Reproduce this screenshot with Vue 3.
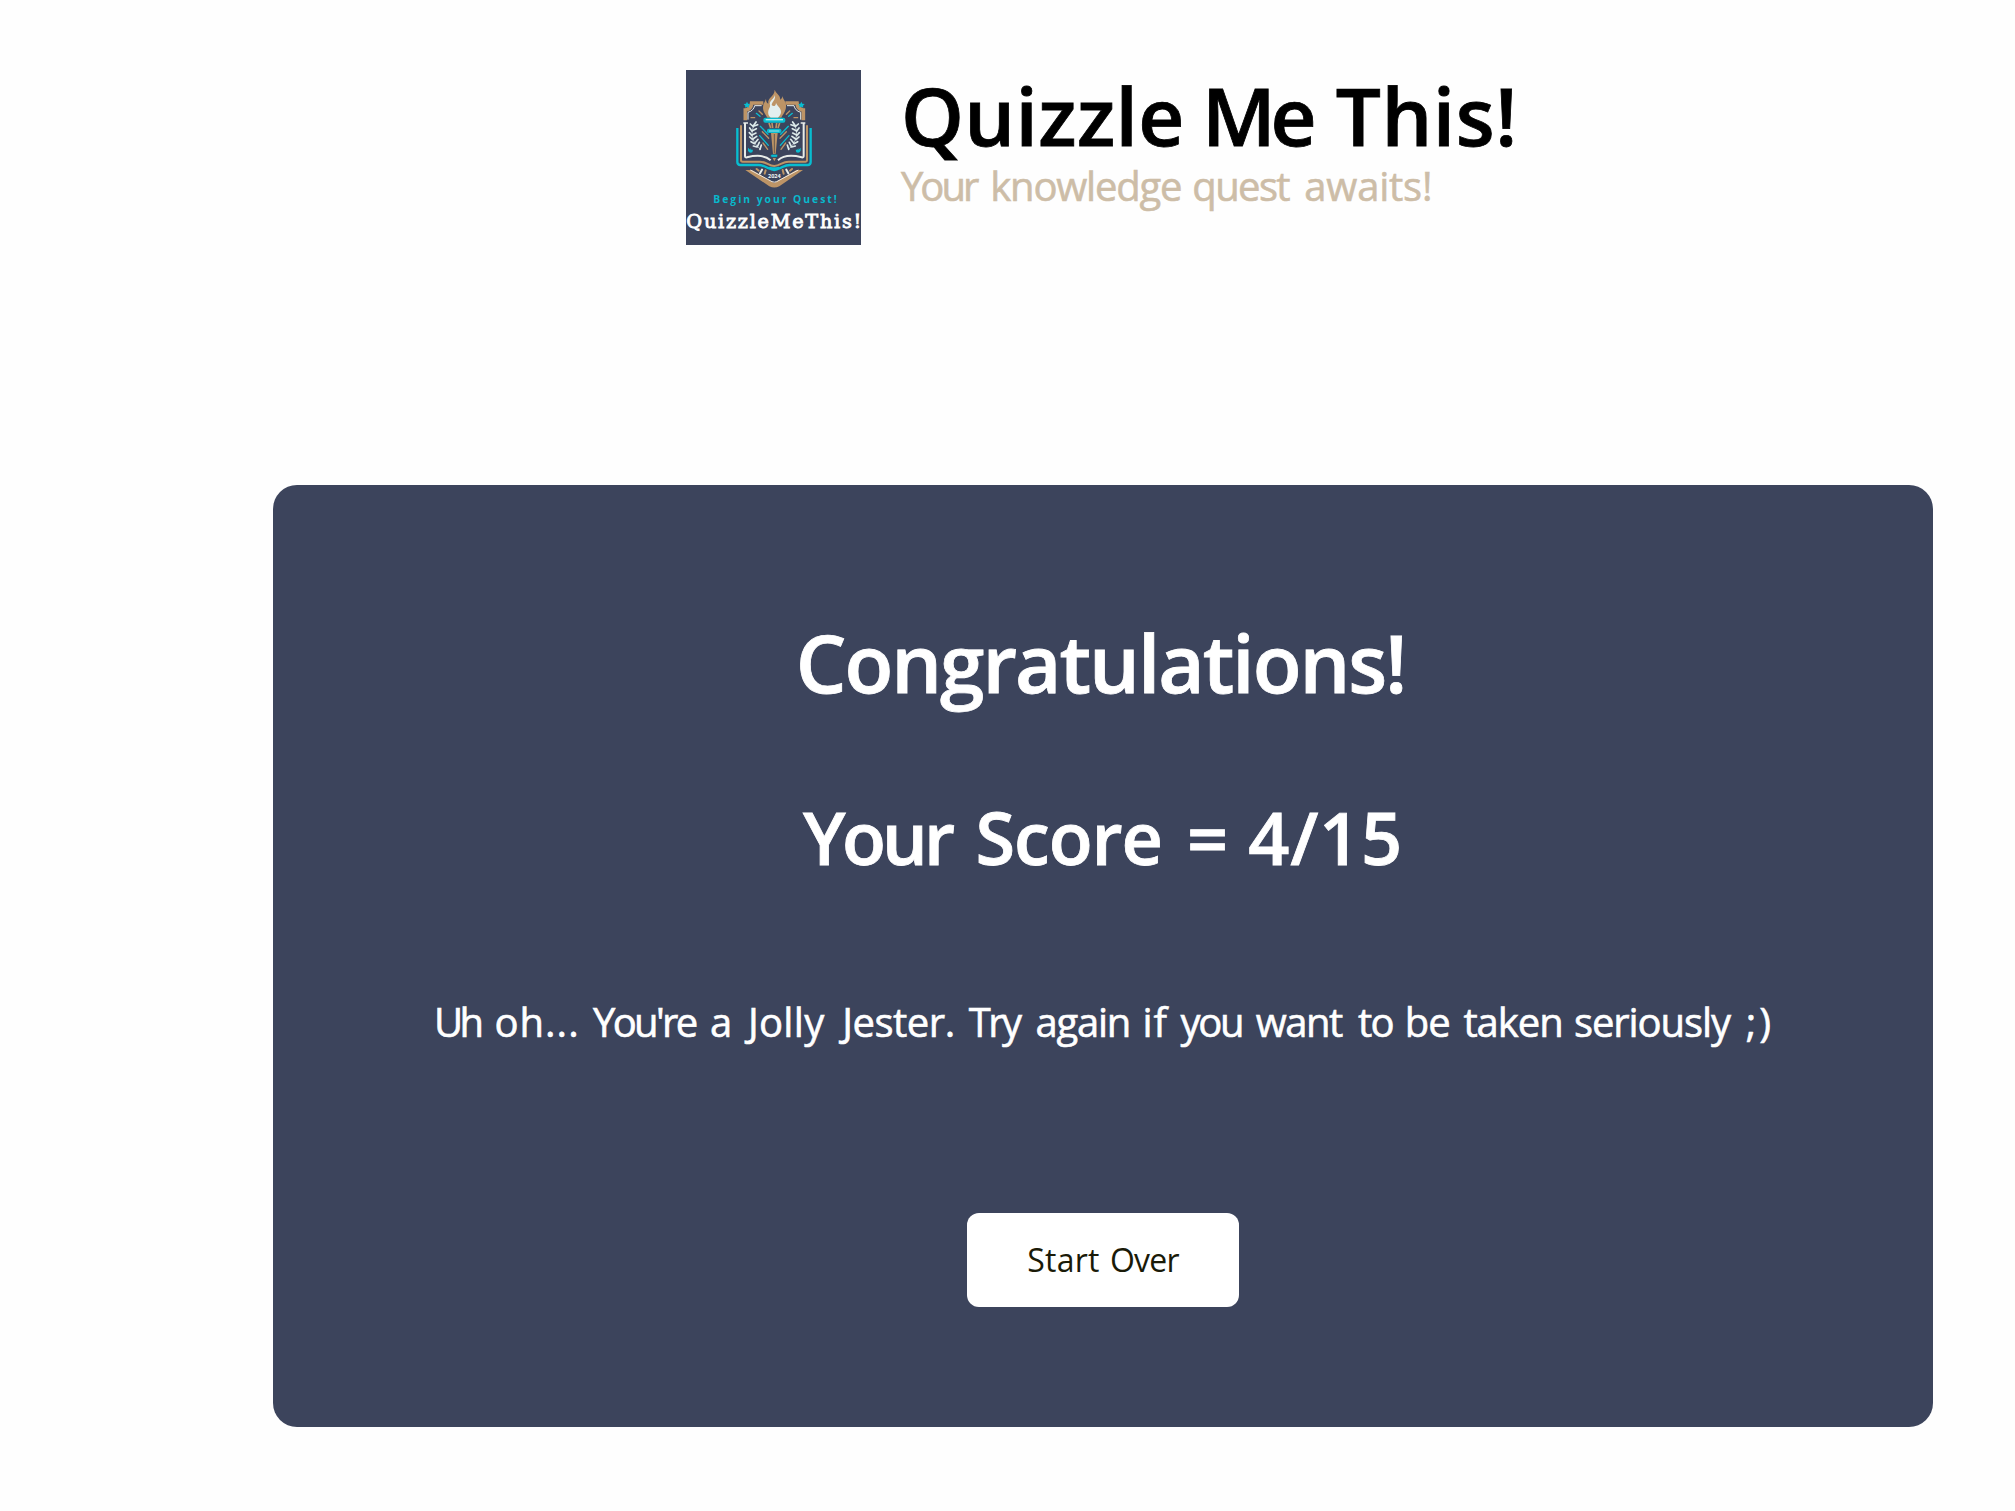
<script setup>
// Each word: [text, letter-spacing, extra space before it], in px.
const title = [['Quizzle', 0.39, 0], ['Me', -5.2, -3.5], ['This!', 0.58, 3.4]]
const tagline = [['Your', -3, -1], ['knowledge', -1.21, 3.6], ['quest', -1.63, 0.7], ['awaits!', -0.21, 5]]
const score = [['Your', -3.76, 0], ['Score', -1.09, 5.5], ['=', 0, 6.3], ['4/15', 0.79, 1.3]]
const message = [
  ['Uh', -3.8, 1], ['oh...', 1, 4], ["You're", -2.69, 3], ['a', 0, 4.2], ['Jolly', 0.3, 5.3],
  ['Jester.', -0.47, 7.3], ['Try', -2.59, 3.7], ['again', -1.22, 5.6], ['if', 1, 1.9], ['you', -2.2, 2],
  ['want', -1.55, 3], ['to', -1.86, 6], ['be', -0.87, 1.6], ['taken', -1.04, 3.2], ['seriously', -1.1, 0.9],
  [';)', 3, 5.4],
]
const button = [['Start', 0.2, 0], ['Over', -0.81, 2.1]]
const spacing = ([, ls, gap]) => ({ letterSpacing: ls + 'px', marginLeft: gap + 'px' })
</script>

<template>
  <main class="page">
    <header class="header">
      <svg class="logo" viewBox="18 18 525 525" role="img" aria-label="QuizzleMeThis!">
        <rect x="18" y="18" width="525" height="525" fill="#3c445c" />
        <!-- shield -->
        <path d="M196 169V138C207 137 214 129 215 117H250M370 169V138C359 137 352 129 351 117H316" fill="none" stroke="#bd9466" stroke-width="11" />
        <path d="M204 167V145C216 142 222 134 224 125H245M362 167V145C350 142 344 134 342 125H321" fill="none" stroke="#e8ece9" stroke-width="3" />
        <path d="M196 318H216L282 357L349 318H369L298 367Q283 374 268 367Z" fill="#bd9466" />
        <path d="M211 318L276 353Q283 356 290 353L355 318" fill="none" stroke="#f0e9df" stroke-width="3" />
        <!-- stars -->
        <path d="M201 113L204 119L211 120L206 125L207 131L201 128L195 131L196 125L191 120L198 119Z" fill="#08bdd0" />
        <path d="M364 113L367 119L374 120L369 125L370 131L364 128L358 131L359 125L354 120L361 119Z" fill="#08bdd0" />
        <!-- book -->
        <g fill="none" stroke-linejoin="round">
          <path d="M172 192V294Q172 303 181 303H235C252 303 258 311 267 313H298C307 311 313 303 330 303H383Q392 303 392 294V192" stroke="#08bdd0" stroke-width="7" />
          <path d="M267 311Q283 323 298 311" stroke="#08bdd0" stroke-width="9" />
          <path d="M183 184V289Q183 293 188 293H240C259 293 266 306 283 306S306 293 326 293H377Q381 293 381 289V184" stroke="#bd9466" stroke-width="6" />
          <path d="M195 177V276Q195 281 201 280C233 272 257 275 272 289M371 177V276Q371 281 365 280C333 272 309 275 294 289" stroke="#e8ece9" stroke-width="6" />
          <path d="M190 177H204M376 177H362" stroke="#e8ece9" stroke-width="4" />
        </g>
        <!-- laurels -->
        <path d="M229 174C210 195 211 232 242 257M337 174C356 195 355 232 324 257" fill="none" stroke="#dce9e9" stroke-width="2" />
        <path d="M228 174l-8 11M222 186l11-4M220 188l-9-8M217 200l12-6M216 202l-7-10M216 213l12-6M216 215l-8-9M219 225l11-8M218 227l-9-8M225 237l9-11M224 239l-11-6M232 248l6-13M231 249l-11-3M240 256l4-13
          M338 174l8 11M344 186l-11-4M346 188l9-8M349 200l-12-6M350 202l7-10M350 213l-12-6M350 215l8-9M347 225l-11-8M348 227l9-8M341 237l-9-11M342 239l11-6M334 248l-6-13M335 249l11-3M326 256l-4-13" stroke="#dce9e9" stroke-width="5" stroke-linecap="round" />
        <!-- rays -->
        <g stroke-width="4" stroke-linecap="round">
          <path d="M229 148L240 157M337 148L326 157M241 187L264 211M325 187L302 211M239 215L265 244M327 215L301 244" stroke="#08bdd0" />
          <path d="M237 141L247 151M329 141L319 151M247 203L266 223M319 203L300 223M249 237L263 256M317 237L303 256" stroke="#bd9466" />
          <path d="M213 161L224 161M353 161L342 161" stroke="#bd9466" />
        </g>
        <path d="M204 251L211 258V252L214 257L219 257L217 265Q208 269 204 260ZM362 251L355 258V252L352 257L347 257L349 265Q358 269 362 260Z" fill="#08bdd0" />
        <!-- torch -->
        <path d="M284 77C289 91 300 91 301 107C306 103 307 99 307 96C309 107 320 114 318 129C317 144 308 151 304 161H262C257 151 248 142 249 129C249 118 256 113 258 104C258 112 260 117 265 119C262 99 284 98 284 77Z" fill="#bd9466" />
        <path d="M285 93C287 108 277 112 275 123C281 130 288 125 288 116C291 127 303 130 303 144C303 152 298 157 294 161H272C266 155 263 149 265 140C266 133 272 129 270 122C266 111 282 106 285 93Z" fill="#e2efef" />
        <path d="M265 174H301L292 270H274Z" fill="#3c445c" />
        <path d="M267 177L272 192M276 177L278 192M290 177L288 192M299 177L294 192" stroke="#bd9466" stroke-width="5" />
        <path d="M273 207H293L287 270H279Z" fill="#bd9466" />
        <path d="M283 210V268" stroke="#65584f" stroke-width="3" />
        <rect x="250" y="161" width="66" height="15" rx="6" fill="#08bdd0" />
        <path d="M257 167H309" stroke="#c2eef0" stroke-width="4" />
        <rect x="261" y="194" width="43" height="13" rx="5" fill="#08bdd0" />
        <path d="M267 201H298" stroke="#9ce4ea" stroke-width="3" />
        <rect x="272" y="271" width="21" height="9" rx="4" fill="#08bdd0" stroke="#3c445c" stroke-width="2" />
        <path d="M278 282L283 292L288 282Z" fill="#bd9466" />
        <!-- date -->
        <g stroke-width="6" stroke-linecap="round">
          <path d="M230 315L236 320M336 315L330 320" stroke="#bd9466" />
          <path d="M246 317L240 328M319 317L325 328" stroke="#e8ece9" />
          <path d="M257 319L254 329M308 318L311 329" stroke="#bd9466" />
        </g>
        <text x="264" y="341" textLength="38" lengthAdjust="spacingAndGlyphs" class="year">2024</text>
        <text x="100" y="418" textLength="370" class="motto">Begin your Quest!</text>
        <text x="19" y="493" textLength="525" class="brand">QuizzleMeThis!</text>
      </svg>
      <div class="heading">
        <h1 class="title"><template v-for="w in title" :key="w[0]"><span :style="spacing(w)">{{ w[0] }}</span>{{ ' ' }}</template></h1>
        <p class="tagline"><template v-for="w in tagline" :key="w[0]"><span :style="spacing(w)">{{ w[0] }}</span>{{ ' ' }}</template></p>
      </div>
    </header>

    <section class="card">
      <h2 class="congrats">Congratulations!</h2>
      <h3 class="score"><template v-for="w in score" :key="w[0]"><span :style="spacing(w)">{{ w[0] }}</span>{{ ' ' }}</template></h3>
      <p class="message"><template v-for="w in message" :key="w[0]"><span :style="spacing(w)">{{ w[0] }}</span>{{ ' ' }}</template></p>
      <button class="restart"><template v-for="w in button" :key="w[0]"><span :style="spacing(w)">{{ w[0] }}</span>{{ ' ' }}</template></button>
    </section>
  </main>
</template>

<style>
body {
  background: #fefefe;
}
</style>

<style scoped>
.page {
  box-sizing: border-box;
  width: 2015px;
  height: 1511px;
  padding: 70px 82px 84px 273px;
  overflow: hidden;
  font-family: "Trebuchet MS", "Open Sans", sans-serif;
}
.header {
  display: flex;
  gap: 40px;
  height: 175px;
  padding-left: 413px;
}
.logo {
  flex: none;
  width: 175px;
  height: 175px;
}
.year {
  font: 700 17px "Open Sans", sans-serif;
  fill: #f4f4f4;
}
.motto {
  font: 700 31px "Open Sans", sans-serif;
  fill: #08b9cc;
}
.brand {
  font: 400 58px "Roboto Slab", "DejaVu Serif", serif;
  fill: #fff;
  stroke: #fff;
  stroke-width: 2.5px;
}
.heading {
  margin-top: -1px;
  white-space: nowrap;
}
.title,
.congrats {
  margin: 0;
  font-size: 80px;
  font-weight: 600;
  line-height: 92px;
  -webkit-text-stroke: 0.8px currentColor;
}
.title {
  color: #000;
}
.tagline {
  margin: 2px 0 0 1px;
  color: #cdbda7;
  font-size: 40px;
  line-height: 46px;
  -webkit-text-stroke: 0.6px currentColor;
}
.card {
  display: flex;
  flex-direction: column;
  align-items: center;
  box-sizing: border-box;
  width: 1660px;
  height: 942px;
  margin-top: 240px;
  padding-top: 131px;
  border-radius: 24px;
  background: #3c445c;
  color: #fff;
  white-space: nowrap;
}
.congrats {
  margin-right: 5px;
  letter-spacing: -1.98px;
}
.score {
  margin: 87px 0 0;
  font-size: 72px;
  font-weight: 600;
  line-height: 84px;
  -webkit-text-stroke: 0.8px currentColor;
}
.message {
  margin: 120px 0 0 1px;
  font-size: 40px;
  line-height: 46px;
  -webkit-text-stroke: 0.6px currentColor;
}
.restart {
  width: 272px;
  height: 94px;
  margin-top: 168px;
  padding: 0;
  border: 0;
  border-radius: 12px;
  background: #fff;
  color: #1a1a08;
  font: inherit;
  font-size: 32px;
  line-height: 94px;
}
</style>
